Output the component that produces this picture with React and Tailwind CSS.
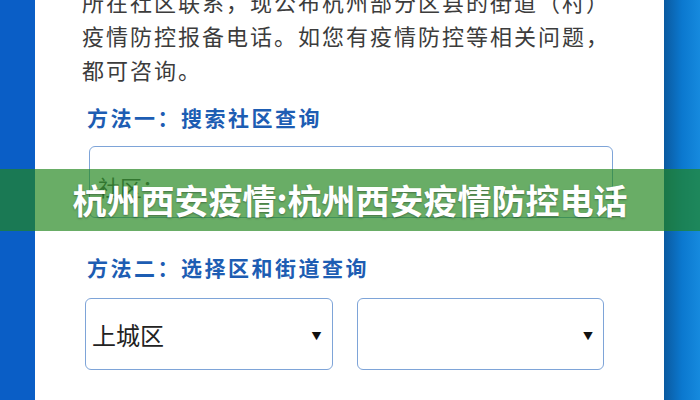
import React from 'react';

const cjk = { fontFamily: '"Noto Sans CJK SC", "Noto Sans", sans-serif' };

const lines = [
  '所在社区联系，现公布杭州部分区县的街道（村）',
  '疫情防控报备电话。如您有疫情防控等相关问题，',
  '都可咨询。',
];

const Select = ({ value }) => (
  <div className="flex-1 h-[72px] border border-[#7ea4d8] rounded-[6px] flex items-center justify-between pl-[6px] pr-[10px] pt-[2px] bg-white">
    <span className="text-[24px] text-[#222]">{value}</span>
    <span className="text-[10px] text-[#111]">▼</span>
  </div>
);

export default function App() {
  return (
    <div className="relative w-[700px] h-[400px] overflow-hidden flex" style={cjk}>
      <div className="w-[35px] bg-[#0a5ec6]" />

      <div className="flex-1 bg-white pl-[47px] pr-[50px] flex flex-col">
        <div className="mt-[-16px] text-[22px] leading-[34px] tracking-[2px] text-[#3c3c3c]">
          {lines.map((l) => (
            <div key={l}>{l}</div>
          ))}
        </div>

        <h2 className="mt-[16px] ml-[5px] text-[21px] leading-[30px] font-bold tracking-[2.5px] text-[#1d5db3]">
          方法一：搜索社区查询
        </h2>
        <div className="mt-[14px] ml-[7px] w-[524px] h-[72px] border border-[#7ea4d8] rounded-[6px] flex items-center pl-[8px] pt-[8px]">
          <span className="text-[22px] text-[#555]">社区：</span>
        </div>

        <h2 className="mt-[34px] ml-[5px] text-[21px] leading-[30px] font-bold tracking-[2.5px] text-[#1d5db3]">
          方法二：选择区和街道查询
        </h2>
        <div className="mt-[16px] ml-[3px] w-[519px] flex gap-[24px]">
          <Select value="上城区" />
          <Select value="" />
        </div>
      </div>

      <div className="w-[36px] bg-gradient-to-r from-[#0a5aa0] via-[#0b78cf] to-[#168ade]" />

      {/* title banner laid over the page */}
      <div className="absolute left-0 right-0 top-[169px] h-[62px] bg-[rgba(34,134,30,0.68)] flex items-center justify-center">
        <span className="text-[34px] font-bold text-white leading-none [text-shadow:0_1px_2px_rgba(0,0,0,0.35)]">
          杭州西安疫情:杭州西安疫情防控电话
        </span>
      </div>
    </div>
  );
}
